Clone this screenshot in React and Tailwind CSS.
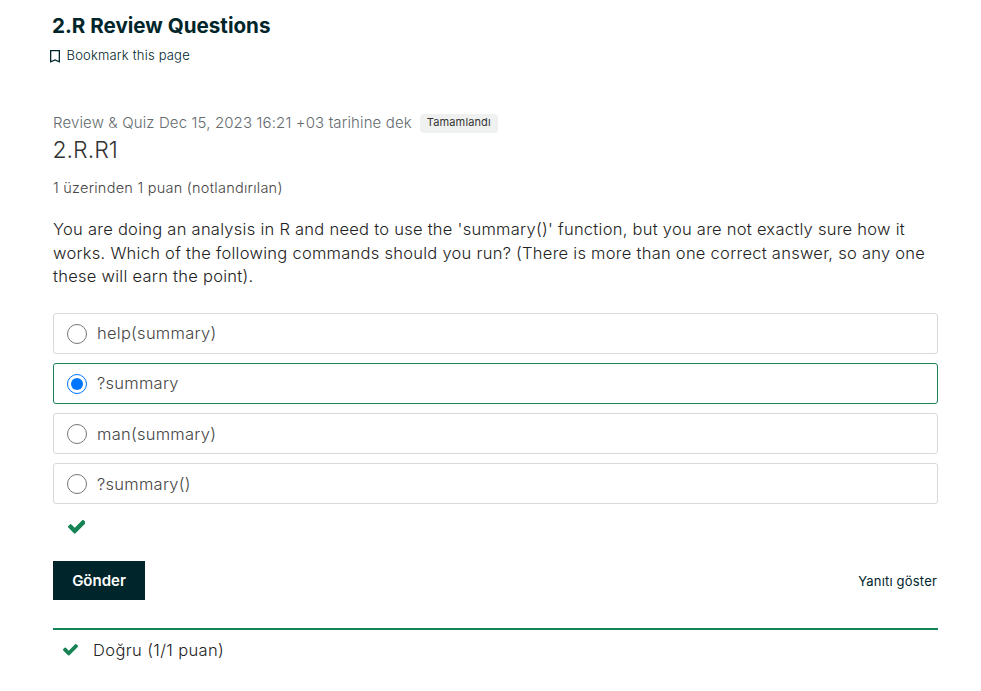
const options = ['help(summary)', '?summary', 'man(summary)', '?summary()'];

function Check({ className }) {
  return (
    <svg viewBox="121 334 1550 1188" className={className} fill="currentColor">
      <path d="M1671 566q0 40-28 68l-724 724-136 136q-28 28-68 28t-68-28l-136-136-362-362q-28-28-28-68t28-68l136-136q28-28 68-28t68 28l294 295 656-657q28-28 68-28t68 28l136 136q28 28 28 68z" />
    </svg>
  );
}

export default function App() {
  return (
    <main className="h-[691px] w-[981px] overflow-hidden bg-white pl-[53px] pr-[43px] font-['Inter',sans-serif] text-[#454545]">
      <h1 className="-ml-px pt-[12px] text-[20.6px] leading-[28px] font-bold text-[#00262b]">2.R Review Questions</h1>
      <div className="-ml-[3px] mt-[6px] flex h-[20px] items-center text-[13px] text-[#00262b]">
        <svg width="10" height="13" viewBox="0 0 10 13" fill="none" stroke="currentColor" strokeWidth="1.3" className="mr-[6.5px]">
          <path d="M.65.65h8.7v11.2L5 9.9.65 11.85z" />
        </svg>
        <span className="tracking-[0.19px] font-[350]">Bookmark this page</span>
      </div>
      <div className="mt-[46px] flex h-[22px] items-center">
        <span className="text-[15px] tracking-[0.13px] font-[350] text-[#646b6e]">Review &amp; Quiz Dec 15, 2023 16:21 +03 tarihine dek</span>
        <span className="ml-[8px] flex h-[19px] items-center rounded-[4px] bg-[#eff1f1] px-[7px] pb-px text-[11px] tracking-[0.13px] text-[#333]">Tamamlandı</span>
      </div>
      <h2 className="-ml-[0.5px] mt-px text-[23px] leading-[30px] font-light text-[#333]">2.R.R1</h2>
      <p className="mt-[12px] text-[14.5px] leading-[22px] tracking-[0.25px] font-[350]">1 üzerinden 1 puan (notlandırılan)</p>
      <p className="mt-[19px] text-[16.5px] leading-[23.5px] tracking-[0.265px] font-light text-[#222] whitespace-nowrap">
        You are doing an analysis in R and need to use the 'summary()' function, but you are not exactly sure how it<br />
        works. Which of the following commands should you run? (There is more than one correct answer, so any one<br />
        these will earn the point).
      </p>
      <div className="mt-[24px] flex flex-col gap-[9px]">
        {options.map((label, index) => (
          <label key={label} className={`flex h-[41px] items-center rounded-[3px] border pt-px pl-[13px] text-[16.5px] tracking-[0.26px] font-light ${index === 1 ? 'border-[#178253]' : 'border-[#d9d9d9]'}`}>
            <span className={`mr-[10px] flex size-[20px] items-center justify-center rounded-full border ${index === 1 ? 'border-[#0075ff]' : 'border-[#767676]'}`}>
              {index === 1 && <span className="size-[12px] rounded-full bg-[#0075ff]" />}
            </span>
            <span className={index > 1 ? 'pt-[2px]' : ''}>{label}</span>
          </label>
        ))}
      </div>
      <Check className="ml-[14.5px] mt-[16.5px] h-[13.5px] w-[17.6px] text-[#178253]" />
      <div className="mt-[27px] flex h-[39px] items-center justify-between">
        <button className="h-[39px] w-[92px] bg-[#00262b] pt-[2px] text-[15px] font-semibold text-white">Gönder</button>
        <button className="mr-px pt-[4px] text-[13px] tracking-[0.19px] text-[#00262b]">Yanıtı göster</button>
      </div>
      <div className="mt-[28px] flex items-center border-t-2 border-[#178253] pt-[8px]">
        <Check className="ml-[10px] mt-px h-[11.5px] w-[15px] text-[#178253]" />
        <span className="ml-[15px] text-[16.5px] leading-[24px] tracking-[0.38px] font-light text-[#222]">Doğru (1/1 puan)</span>
      </div>
    </main>
  );
}
